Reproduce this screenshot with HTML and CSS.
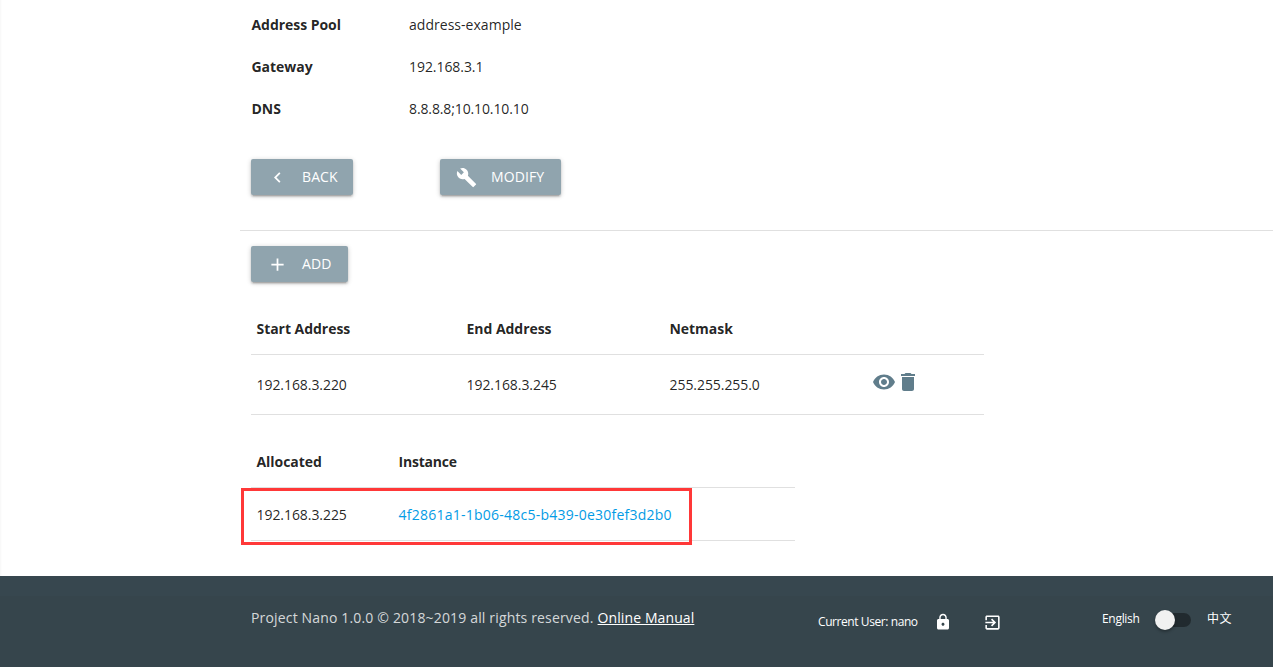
FILE: index.html
```html
<!DOCTYPE html>
<html lang="en">
<head>
<meta charset="utf-8">
<title>Project Nano</title>
<link rel="stylesheet" href="styles.css">
</head>
<body>
<main class="content">
  <dl class="details">
    <dt class="pool">Address Pool</dt><dd class="pool-value">address-example</dd>
    <dt class="gateway">Gateway</dt><dd>192.168.3.1</dd>
    <dt class="dns">DNS</dt><dd class="dns-value">8.8.8.8;10.10.10.10</dd>
  </dl>
  <div class="actions">
    <a class="btn btn-back"><svg viewBox="0 0 24 24"><path d="M15.41 7.41L14 6l-6 6 6 6 1.41-1.41L10.83 12z"/></svg><span>BACK</span></a>
    <a class="btn btn-modify"><svg viewBox="0 0 24 24"><path d="M22.7 19l-9.1-9.1c.9-2.3.4-5-1.5-6.900-2-2-5-2.400-7.400-1.300L9 6 6 9 1.600 4.700C.4 7.100.9 10.100 2.900 12.100c1.900 1.900 4.600 2.400 6.900 1.500l9.100 9.100c.4.4 1 .4 1.400 0l2.300-2.300c.5-.4.5-1.100.1-1.400z"/></svg><span>MODIFY</span></a>
  </div>
  <hr class="divider">
  <div class="toolbar">
    <a class="btn btn-add"><svg viewBox="0 0 24 24"><path d="M19 13h-6v6h-2v-6H5v-2h6V5h2v6h6v2z"/></svg><span>ADD</span></a>
  </div>
  <section class="ranges">
    <div class="row head"><span class="h-start">Start Address</span><span class="h-end">End Address</span><span class="h-mask">Netmask</span></div>
    <div class="row">
      <span>192.168.3.220</span><span>192.168.3.245</span><span>255.255.255.0</span>
      <span class="icons">
        <svg viewBox="0 0 24 24"><path d="M12 4.500C7 4.500 2.730 7.610 1 12c1.730 4.390 6 7.500 11 7.500s9.270-3.110 11-7.500c-1.730-4.390-6-7.500-11-7.500zM12 17c-2.760 0-5-2.240-5-5s2.240-5 5-5 5 2.240 5 5-2.240 5-5 5zm0-8c-1.660 0-3 1.340-3 3s1.340 3 3 3 3-1.340 3-3-1.340-3-3-3z"/></svg><svg viewBox="0 0 24 24"><path d="M6 19c0 1.100.9 2 2 2h8c1.100 0 2-.9 2-2V7H6v12zM19 4h-3.500l-1-1h-5l-1 1H5v2h14V4z"/></svg>
      </span>
    </div>
  </section>
  <section class="allocated">
    <div class="row head"><span class="h-alloc">Allocated</span><span class="h-inst">Instance</span></div>
    <div class="row"><span>192.168.3.225</span><a class="instance">4f2861a1-1b06-48c5-b439-0e30fef3d2b0</a></div>
    <div class="highlight"></div>
  </section>
</main>
<footer class="footer">
  <div class="footer-bar">
    <div class="copyright"><span class="rights">Project Nano 1.0.0 © 2018~2019 all rights reserved.</span><a class="manual">Online Manual</a></div>
    <div class="user"><span class="user-name">Current User: nano</span>
      <svg class="lock" viewBox="0 0 24 24"><path d="M18 8h-1V6c0-2.760-2.240-5-5-5S7 3.240 7 6v2H6c-1.100 0-2 .9-2 2v10c0 1.100.9 2 2 2h12c1.100 0 2-.9 2-2V10c0-1.100-.9-2-2-2zm-6 9c-1.100 0-2-.9-2-2s.9-2 2-2 2 .9 2 2-.9 2-2 2zm3.100-9H8.900V6c0-1.710 1.390-3.100 3.100-3.100s3.100 1.390 3.100 3.100v2z"/></svg>
      <svg class="exit" viewBox="0 0 24 24"><path d="M10.090 15.590L11.500 17l5-5-5-5-1.410 1.410L12.670 11H3v2h9.670l-2.580 2.590zM19 3H5c-1.110 0-2 .9-2 2v4h2V5h14v14H5v-4H3v4c0 1.100.89 2 2 2h14c1.100 0 2-.9 2-2V5c0-1.100-.9-2-2-2z"/></svg>
    </div>
    <div class="language"><span class="english">English</span><span class="switch"><span class="thumb"></span></span><span class="chinese">中文</span></div>
  </div>
</footer>
</body>
</html>
```
FILE: styles.css
```css
* { box-sizing: border-box; }
body {
  margin: 0;
  height: 667px;
  overflow: hidden;
  display: flex;
  flex-direction: column;
  background: #fff linear-gradient(to right, #f7f7f7, #fff) no-repeat 0 0 / 2px 100%;
  color: rgba(0, 0, 0, 0.87);
  font: 14px/20px "Open Sans", "Noto Sans CJK SC", sans-serif;
  letter-spacing: -0.06px;
  white-space: nowrap;
}
.content { height: 576px; padding: 4px 0 0 240px; }
.details {
  margin: 0 0 0 11.500px;
  display: grid;
  grid-template-columns: 157.500px auto;
  grid-auto-rows: 42px;
  align-items: center;
}
.details dt, .head { font-weight: 700; letter-spacing: -0.04px; }
.details dd { margin: 0; }
.details .pool-value { letter-spacing: 0.03px; }
.details .dns-value { letter-spacing: -0.12px; }
.actions { display: flex; gap: 87px; padding: 29px 0 0 11px; }
.btn {
  height: 36px;
  display: flex;
  align-items: center;
  padding-left: 16px;
  border-radius: 2px;
  background: #90a4ae;
  color: #fff;
  letter-spacing: 0.1px;
  box-shadow: 0 2px 2px rgba(0, 0, 0, 0.14), 0 3px 1px -2px rgba(0, 0, 0, 0.12), 0 1px 5px rgba(0, 0, 0, 0.2);
}
.btn svg { width: 21px; height: 21px; margin-right: 14px; fill: currentColor; }
.btn-back { width: 102px; }
.btn-modify { width: 121px; }
.btn-add { width: 97px; }
.divider { margin: 35px 0 0; border: 0; height: 1px; background: #e0e0e0; }
.toolbar { padding: 15px 0 0 11px; }
.row { display: grid; align-items: center; padding-left: 5.500px; border-bottom: 1px solid #e0e0e0; }
.ranges { width: 733px; margin: 22px 0 0 11px; }
.ranges .row { grid-template-columns: 210px 203px 202.500px auto; height: 60px; }
.ranges .head { height: 51px; }
.icons { display: flex; height: 30px; }
.icons svg { width: 24px; height: 24px; fill: #607d8b; }
.allocated { position: relative; width: 544px; margin: 22px 0 0 11px; }
.allocated .row { grid-template-columns: 142px auto; height: 53px; padding-top: 1px; }
.allocated .head { height: 51px; padding-top: 0; }
.instance { color: #039be5; letter-spacing: 0.24px; }
.h-inst { letter-spacing: -0.2px; }
.highlight {
  position: absolute;
  left: -10px;
  top: 51px;
  width: 451px;
  height: 57px;
  border: 3px solid #ff3838;
}
.footer { height: 91px; padding-top: 20px; background: #37474f; }
.footer-bar {
  height: 71px;
  display: flex;
  align-items: flex-start;
  padding-left: 251px;
  background: rgba(51, 51, 51, 0.08);
  color: #fff;
  font-size: 12px;
}
.copyright { width: 567px; padding-top: 12px; font-size: 14px; display: flex; gap: 4px; }
.rights { color: rgba(255, 255, 255, 0.8); letter-spacing: 0.16px; }
.manual { text-decoration: underline; letter-spacing: 0.1px; }
.user { width: 284px; padding-top: 16px; display: flex; align-items: center; }
.user-name { width: 116px; letter-spacing: -0.42px; }
.user svg { fill: #fff; }
.lock { width: 18px; height: 18px; }
.exit { width: 19px; height: 19px; margin-left: 31px; }
.language { padding-top: 13px; display: flex; align-items: center; }
.english { width: 55px; letter-spacing: -0.3px; }
.switch { position: relative; width: 34px; height: 14px; margin-top: 2px; border-radius: 7px; background: rgba(0, 0, 0, 0.38); }
.thumb {
  position: absolute;
  left: -2px;
  top: -3px;
  width: 20px;
  height: 20px;
  border-radius: 50%;
  background: #f1f1f1;
  box-shadow: 0 2px 3px rgba(0, 0, 0, 0.3);
}
.chinese { margin-left: 16px; letter-spacing: 0.4px; }
```
